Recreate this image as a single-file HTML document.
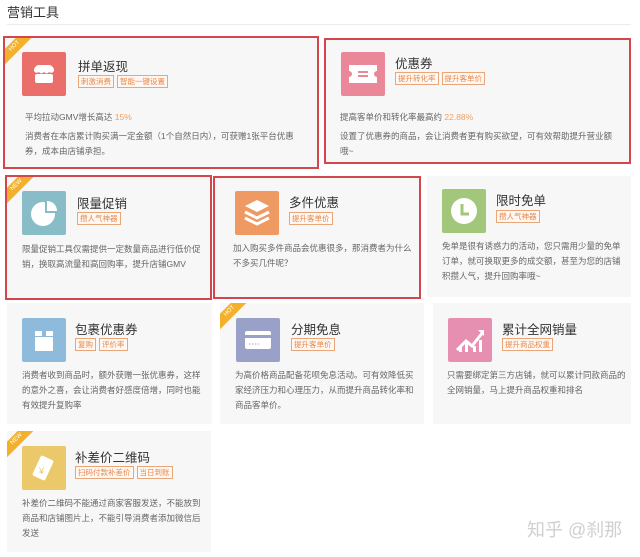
<!DOCTYPE html>
<html><head><meta charset="utf-8"><style>
*{margin:0;padding:0;box-sizing:border-box}
body{width:640px;height:557px;background:#fff;position:relative;overflow:hidden;font-family:"Liberation Sans","Noto Sans CJK SC",sans-serif;color:#555}
.h{position:absolute;left:7px;top:2px;font-size:13px;color:#333}
.line{position:absolute;left:7px;right:9px;top:24px;height:1px;background:#ececec}
.c{position:absolute;background:#f7f7f7;overflow:hidden}
.r{border:2px solid #d4464b}
.ic{position:absolute;width:44px;height:44px;border-radius:2px}
.t{position:absolute;font-size:12.5px;color:#333;white-space:nowrap}
.tags{position:absolute;white-space:nowrap}
.tag{display:inline-block;font-size:7.5px;line-height:11px;color:#e8864a;border:1px solid #e9a679;padding:0 2px;margin-right:3px;background:#fff8f2}
.d{position:absolute;font-size:8.5px;line-height:15px;color:#666}
.hl{color:#f0a060}
.rib{position:absolute;left:-16px;top:3px;width:52px;height:11px;background:#f2b02c;transform:rotate(-45deg);color:#fff;font-size:6px;text-align:center;line-height:11px}
.wm{position:absolute;left:527px;top:516px;font-size:18px;color:#d0d0d0}
</style></head><body>
<div class="h">营销工具</div><div class="line"></div>

<div class="c r" style="left:3px;top:36px;width:316px;height:133px">
<div class="rib">HOT</div>
<div class="ic" style="left:17px;top:14px;background:#ea6f6b"><svg width="44" height="44"><path d="M12 17 q2-4 5-4h10q3 0 5 4v2q-2 3-5 1-2 3-5 0-3 3-5 0-3 2-5-1z" fill="#fff"/><rect x="13" y="22" width="18" height="9" rx="2" fill="#fff"/></svg></div>
<div class="t" style="left:73px;top:18px">拼单返现</div>
<div class="tags" style="left:73px;top:33px"><span class="tag">刺激消费</span><span class="tag">智能一键设置</span></div>
<div class="d" style="left:20px;top:72px">平均拉动GMV增长高达 <span class="hl">15%</span></div>
<div class="d" style="left:20px;top:91px;width:280px">消费者在本店累计购买满一定金额（1个自然日内），可获赠1张平台优惠券，成本由店铺承担。</div>
</div>

<div class="c r" style="left:324px;top:38px;width:307px;height:126px">
<div class="ic" style="left:15px;top:12px;background:#ea8798"><svg width="44" height="44"><path d="M8 13h28v6a3 3 0 0 0 0 6v6H8v-6a3 3 0 0 0 0-6z" fill="#fff"/><rect x="17" y="19" width="10" height="2" fill="#ea8798"/><rect x="17" y="23" width="10" height="2" fill="#ea8798"/></svg></div>
<div class="t" style="left:69px;top:13px">优惠券</div>
<div class="tags" style="left:69px;top:28px"><span class="tag">提升转化率</span><span class="tag">提升客单价</span></div>
<div class="d" style="left:14px;top:70px">提高客单价和转化率最高约 <span class="hl">22.88%</span></div>
<div class="d" style="left:14px;top:89px;width:280px">设置了优惠券的商品，会让消费者更有购买欲望，可有效帮助提升营业额哦~</div>
</div>

<div class="c r" style="left:5px;top:175px;width:207px;height:125px">
<div class="rib">NEW</div>
<div class="ic" style="left:15px;top:14px;background:#88bcc7"><svg width="44" height="44"><circle cx="21" cy="23" r="12" fill="#fff"/><path d="M24 10v11h11a11 11 0 0 0-11-11z" fill="#88bcc7" stroke="#88bcc7" stroke-width="2"/><path d="M25 10v10h10a10 10 0 0 0-10-10z" fill="#fff"/></svg></div>
<div class="t" style="left:70px;top:16px">限量促销</div>
<div class="tags" style="left:70px;top:31px"><span class="tag">攒人气神器</span></div>
<div class="d" style="left:15px;top:65px;width:185px">限量促销工具仅需提供一定数量商品进行低价促销，换取高流量和高回购率，提升店铺GMV</div>
</div>

<div class="c r" style="left:213px;top:176px;width:208px;height:123px">
<div class="ic" style="left:20px;top:13px;background:#ee9a62"><svg width="44" height="44"><path d="M22 9l12 6-12 6-12-6z" fill="#fff"/><path d="M10 21l12 6 12-6M10 27l12 6 12-6" fill="none" stroke="#fff" stroke-width="3"/></svg></div>
<div class="t" style="left:74px;top:14px">多件优惠</div>
<div class="tags" style="left:74px;top:30px"><span class="tag">提升客单价</span></div>
<div class="d" style="left:18px;top:63px;width:185px">加入购买多件商品会优惠很多，那消费者为什么不多买几件呢？</div>
</div>

<div class="c" style="left:427px;top:176px;width:204px;height:121px">
<div class="ic" style="left:15px;top:13px;background:#a3c77a"><svg width="44" height="44"><circle cx="22" cy="22" r="13" fill="#fff"/><path d="M20 15v10h7" fill="none" stroke="#a3c77a" stroke-width="3"/></svg></div>
<div class="t" style="left:69px;top:14px">限时免单</div>
<div class="tags" style="left:69px;top:30px"><span class="tag">攒人气神器</span></div>
<div class="d" style="left:15px;top:63px;width:185px">免单是很有诱惑力的活动，您只需用少量的免单订单，就可换取更多的成交额，甚至为您的店铺积攒人气，提升回购率哦~</div>
</div>

<div class="c" style="left:7px;top:303px;width:205px;height:121px">
<div class="ic" style="left:15px;top:15px;background:#8ebbdc"><svg width="44" height="44"><rect x="13" y="13" width="18" height="5" fill="#fff"/><rect x="13" y="19" width="18" height="14" fill="#fff"/><rect x="20" y="13" width="4" height="6" fill="#8ebbdc"/></svg></div>
<div class="t" style="left:68px;top:16px">包裹优惠券</div>
<div class="tags" style="left:68px;top:31px"><span class="tag">复购</span><span class="tag">评价率</span></div>
<div class="d" style="left:15px;top:65px;width:185px">消费者收到商品时，额外获赠一张优惠券，这样的意外之喜，会让消费者好感度倍增，同时也能有效提升复购率</div>
</div>

<div class="c" style="left:220px;top:303px;width:204px;height:121px">
<div class="rib">HOT</div>
<div class="ic" style="left:16px;top:15px;background:#9aa1c9"><svg width="44" height="44"><rect x="9" y="13" width="26" height="18" rx="2" fill="#fff"/><rect x="9" y="17" width="26" height="3" fill="#9aa1c9"/><path d="M13 26h10" stroke="#9aa1c9" stroke-dasharray="1.5 1.5"/></svg></div>
<div class="t" style="left:71px;top:16px">分期免息</div>
<div class="tags" style="left:71px;top:31px"><span class="tag">提升客单价</span></div>
<div class="d" style="left:15px;top:65px;width:185px">为高价格商品配备花呗免息活动。可有效降低买家经济压力和心理压力，从而提升商品转化率和商品客单价。</div>
</div>

<div class="c" style="left:433px;top:303px;width:198px;height:121px">
<div class="ic" style="left:15px;top:15px;background:#e78fb1"><svg width="44" height="44"><path d="M9 32l9-9 6 5 11-14" fill="none" stroke="#fff" stroke-width="3"/><path d="M30 12h6v6z" fill="#fff"/><rect x="11" y="28" width="3" height="6" fill="#fff"/><rect x="17" y="25" width="3" height="9" fill="#fff"/><rect x="25" y="28" width="3" height="6" fill="#fff"/><rect x="31" y="22" width="3" height="12" fill="#fff"/></svg></div>
<div class="t" style="left:69px;top:16px">累计全网销量</div>
<div class="tags" style="left:69px;top:31px"><span class="tag">提升商品权重</span></div>
<div class="d" style="left:14px;top:65px;width:180px">只需要绑定第三方店铺，就可以累计同款商品的全网销量，马上提升商品权重和排名</div>
</div>

<div class="c" style="left:7px;top:431px;width:204px;height:121px">
<div class="rib">NEW</div>
<div class="ic" style="left:15px;top:15px;background:#ebc869"><svg width="44" height="44"><rect x="14" y="11" width="14" height="22" rx="2" fill="#fff" transform="rotate(25 21 22)"/><text x="17" y="28" font-size="9" fill="#ebc869" font-family="Liberation Sans">¥</text></svg></div>
<div class="t" style="left:68px;top:16px">补差价二维码</div>
<div class="tags" style="left:68px;top:31px"><span class="tag">扫码付款补差价</span><span class="tag">当日到账</span></div>
<div class="d" style="left:15px;top:65px;width:185px">补差价二维码不能通过商家客服发送，不能放到商品和店铺图片上，不能引导消费者添加微信后发送</div>
</div>

<div class="wm">知乎 @刹那</div>
</body></html>
